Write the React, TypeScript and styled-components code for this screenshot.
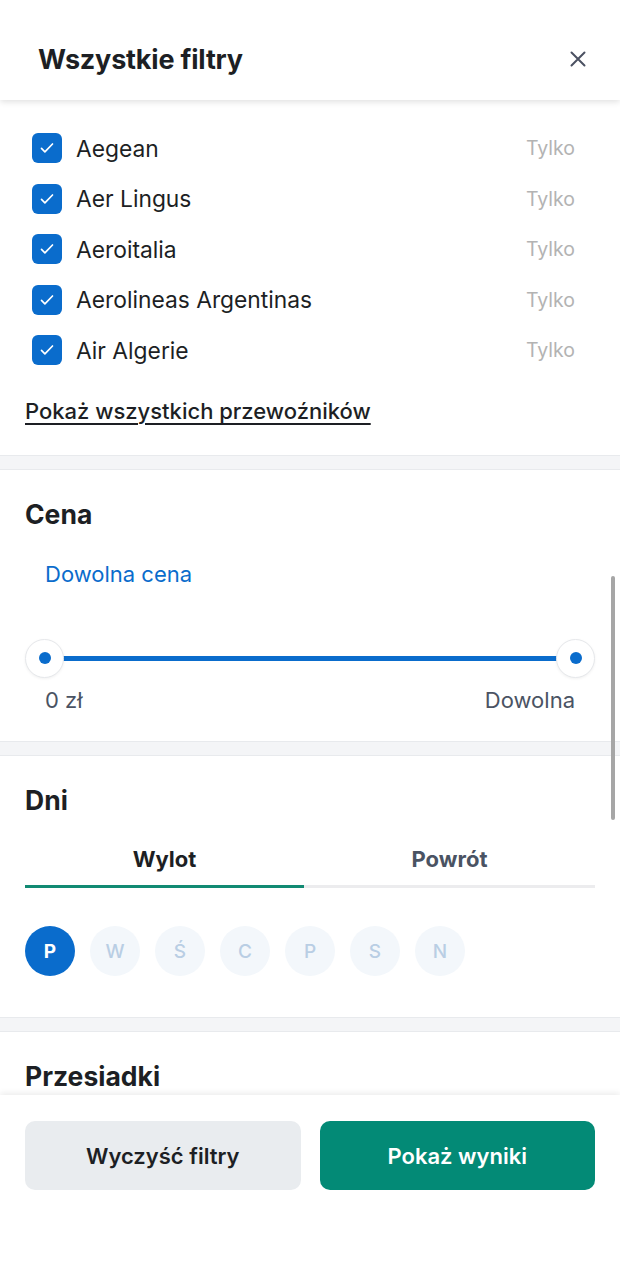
import styled, { createGlobalStyle } from "styled-components"

const airlines = ["Aegean", "Aer Lingus", "Aeroitalia", "Aerolineas Argentinas", "Air Algerie"]
const days = ["P", "W", "Ś", "C", "P", "S", "N"]

const Check = () => (
  <svg width="18" height="18" viewBox="0 0 18 18" fill="none">
    <path d="M3.5 9.4l3.4 3.4L14.5 5" stroke="#fff" strokeWidth="1.7" strokeLinecap="round" strokeLinejoin="round" />
  </svg>
)

const CloseIcon = () => (
  <svg width="18" height="18" viewBox="0 0 18 18" fill="none">
    <path d="M2.5 2.5l13 13M15.5 2.5l-13 13" stroke="#4b5162" strokeWidth="2" strokeLinecap="round" />
  </svg>
)

const App = () => {
  return (
    <>
      <Global />
      <Sheet>
        <Header>
          <Title>Wszystkie filtry</Title>
          <CloseBtn>
            <CloseIcon />
          </CloseBtn>
        </Header>
        <BodyWrap>
          <Section top={0} bottom={30}>
            <List>
              {airlines.map((a) => (
                <Row key={a}>
                  <Box>
                    <Check />
                  </Box>
                  <Label>{a}</Label>
                  <Only>Tylko</Only>
                </Row>
              ))}
            </List>
            <ShowAll>Pokaż wszystkich przewoźników</ShowAll>
          </Section>
          <Band />
          <Section bottom={27}>
            <Heading>Cena</Heading>
            <PriceValue>Dowolna cena</PriceValue>
            <Slider>
              <Track />
              <Thumb>
                <Dot />
              </Thumb>
              <Thumb>
                <Dot />
              </Thumb>
            </Slider>
            <SliderLabels>
              <span>0 zł</span>
              <span>Dowolna</span>
            </SliderLabels>
          </Section>
          <Band />
          <Section bottom={41}>
            <Heading>Dni</Heading>
            <Tabs>
              <Tab active>Wylot</Tab>
              <Tab>Powrót</Tab>
            </Tabs>
            <Days>
              {days.map((d, i) => (
                <Day key={i} selected={i === 0}>
                  {d}
                </Day>
              ))}
            </Days>
          </Section>
          <Band />
          <Section bottom={200}>
            <Heading>Przesiadki</Heading>
          </Section>
          <ScrollThumb />
        </BodyWrap>
        <Footer>
          <ClearBtn>Wyczyść filtry</ClearBtn>
          <ShowBtn>Pokaż wyniki</ShowBtn>
        </Footer>
      </Sheet>
    </>
  )
}

export default App

const Global = createGlobalStyle`
*{box-sizing:border-box;}
body{
  margin:0;
  font-family: Inter, "Noto Sans", sans-serif;
  color:#1d1f24;
  background:#fff;
}
`
const Sheet = styled.div`
height: 1269px;
width: 620px;
display: flex;
flex-direction: column;
background: #fff;
overflow: hidden;
`
const Header = styled.div`
height: 100px;
flex-shrink: 0;
display: flex;
align-items: center;
justify-content: space-between;
padding: 18px 30px 0 38px;
position: relative;
z-index: 2;
background: #fff;
box-shadow: 0 2px 6px rgba(0,0,0,0.12);
`
const Title = styled.h1`
margin: 0;
font-size: 27px;
font-weight: 700;
letter-spacing: -0.2px;
color: #1d1f24;
`
const CloseBtn = styled.div`
width: 24px;
height: 24px;
display: flex;
align-items: center;
justify-content: center;
`
const BodyWrap = styled.div`
flex: 1;
position: relative;
min-height: 0;
overflow: hidden;
`
const ScrollThumb = styled.div`
position: absolute;
right: 5px;
top: 476px;
width: 4px;
height: 244px;
border-radius: 2px;
background: #a6a6a6;
`
const Section = styled.div<{ top?: number; bottom: number }>`
padding: ${(p) => p.top ?? 24}px 25px ${(p) => p.bottom}px;
`
const Heading = styled.h2`
margin: 0;
font-size: 26.5px;
line-height: 40px;
font-weight: 700;
color: #1d1f24;
`
const List = styled.div`
display: flex;
flex-direction: column;
padding: 23px 20px 0 7px;
`
const Row = styled.div`
height: 50.5px;
display: flex;
align-items: center;
`
const Box = styled.div`
width: 30px;
height: 30px;
border-radius: 6px;
background: #0a6ccc;
display: flex;
align-items: center;
justify-content: center;
margin-right: 14px;
`
const Label = styled.span`
flex: 1;
font-size: 22.8px;
color: #1d1f24;
`
const Only = styled.span`
font-size: 19.5px;
color: #b3b3b3;
`
const ShowAll = styled.div`
margin-top: 21.5px;
font-size: 22px;
line-height: 28px;
font-weight: 500;
color: #1d1f24;
text-decoration: underline;
text-underline-offset: 4px;
text-decoration-thickness: 1.5px;
`
const Band = styled.div`
height: 15px;
background: #f4f5f7;
border-top: 1px solid #e8eaed;
border-bottom: 1px solid #e8eaed;
`
const PriceValue = styled.div`
margin: 26px 0 0 20px;
font-size: 22px;
color: #0a6ccc;
line-height: 28px;
`
const Slider = styled.div`
position: relative;
margin-top: 51px;
height: 38px;
display: flex;
align-items: center;
justify-content: space-between;
`
const Track = styled.div`
position: absolute;
left: 19px;
right: 19px;
top: 17px;
height: 5px;
background: #0a6ccc;
`
const Thumb = styled.div`
position: relative;
width: 39px;
height: 39px;
border-radius: 50%;
background: #fff;
border: 1px solid #e6e8eb;
box-shadow: 0 1px 3px rgba(0,0,0,0.06);
display: flex;
align-items: center;
justify-content: center;
`
const Dot = styled.div`
width: 12px;
height: 12px;
border-radius: 50%;
background: #0a6ccc;
`
const SliderLabels = styled.div`
display: flex;
justify-content: space-between;
padding: 0 20px;
margin-top: 9px;
font-size: 22px;
color: #4a5363;
line-height: 28px;
`
const Tabs = styled.div`
display: flex;
margin-top: 26px;
`
const Tab = styled.div<{ active?: boolean }>`
flex: ${(p) => (p.active ? "0 0 279px" : "1")};
text-align: center;
font-size: 22px;
line-height: 27px;
font-weight: 700;
padding-bottom: 12px;
color: ${(p) => (p.active ? "#1d1f24" : "#4a5363")};
border-bottom: 3px solid ${(p) => (p.active ? "#128a73" : "#ececee")};
`
const Days = styled.div`
display: flex;
gap: 15px;
margin-top: 38px;
`
const Day = styled.div<{ selected?: boolean }>`
width: 50px;
height: 50px;
border-radius: 50%;
display: flex;
align-items: center;
justify-content: center;
font-size: 19px;
font-weight: ${(p) => (p.selected ? 700 : 500)};
background: ${(p) => (p.selected ? "#0a6ccc" : "#f3f7fb")};
color: ${(p) => (p.selected ? "#fff" : "#b9cee4")};
`
const Footer = styled.div`
height: 174px;
flex-shrink: 0;
display: flex;
gap: 19px;
padding: 26px 25px 0;
position: relative;
z-index: 2;
background: #fff;
box-shadow: 0 -2px 6px rgba(0,0,0,0.08);
`
const ClearBtn = styled.button`
flex: 1;
height: 69px;
border: none;
border-radius: 10px;
background: #e9ecef;
font-family: inherit;
font-size: 22px;
font-weight: 600;
color: #1d1f24;
`
const ShowBtn = styled.button`
flex: 1;
height: 69px;
border: none;
border-radius: 10px;
background: #038a76;
font-family: inherit;
font-size: 22px;
font-weight: 600;
color: #fff;
`
